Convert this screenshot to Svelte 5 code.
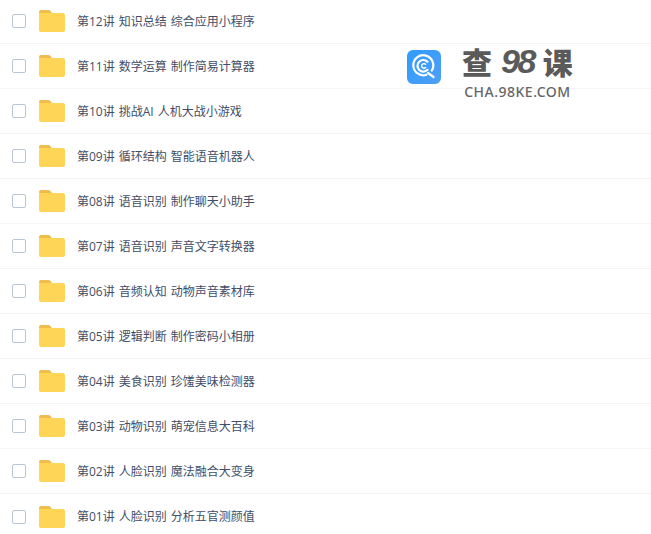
<script>
	const lessons = [
		'第12讲 知识总结 综合应用小程序',
		'第11讲 数学运算 制作简易计算器',
		'第10讲 挑战AI 人机大战小游戏',
		'第09讲 循环结构 智能语音机器人',
		'第08讲 语音识别 制作聊天小助手',
		'第07讲 语音识别 声音文字转换器',
		'第06讲 音频认知 动物声音素材库',
		'第05讲 逻辑判断 制作密码小相册',
		'第04讲 美食识别 珍馐美味检测器',
		'第03讲 动物识别 萌宠信息大百科',
		'第02讲 人脸识别 魔法融合大变身',
		'第01讲 人脸识别 分析五官测颜值'
	];
</script>

<div class="page">
	<ul class="list">
		{#each lessons as name}
			<li class="row">
				<span class="check"></span>
				<svg class="folder" width="26" height="22" viewBox="0 0 26 22" aria-hidden="true">
					<path d="M0 2a2 2 0 0 1 2-2h7.500a2 2 0 0 1 1.600.8L13 3H0z" fill="#f0bc4c" />
					<path d="M0 4a1 1 0 0 1 1-1h23a2 2 0 0 1 2 2v15a2 2 0 0 1-2 2H2a2 2 0 0 1-2-2z" fill="#ffd558" />
				</svg>
				<span class="name">{name}</span>
			</li>
		{/each}
	</ul>

	<div class="mark">
		<svg class="logo" width="34" height="34" viewBox="0 0 34 34" aria-hidden="true">
			<defs>
				<linearGradient id="tile" x1="0" y1="0" x2="1" y2="1">
					<stop offset="0" stop-color="#2f9bff" />
					<stop offset="1" stop-color="#4f9ff5" />
				</linearGradient>
			</defs>
			<rect width="34" height="34" rx="6" fill="url(#tile)" />
			<path d="M24.800 20.500A10 10 0 1 0 19.500 24.700" fill="none" stroke="#fff" stroke-width="2.200" stroke-linecap="round" />
			<path d="M20.500 11.800A5.800 5.800 0 1 0 20.500 19.800" fill="none" stroke="#fff" stroke-width="2.200" stroke-linecap="round" />
			<path d="M18.600 14.300A2.300 2.300 0 1 0 18.600 17.500" fill="none" stroke="#fff" stroke-width="1.400" stroke-linecap="round" />
			<path d="M21 23l5.500 4" stroke="#fff" stroke-width="2.200" stroke-linecap="round" />
		</svg>
		<div class="brand">
			<div class="title"><span>查</span><em>98</em><span>课</span></div>
			<div class="url">CHA.98KE.COM</div>
		</div>
	</div>
</div>

<style>
	:global(body) {
		background: #fff;
	}

	.page {
		position: relative;
		width: 651px;
		height: 534px;
		overflow: hidden;
		font-family: 'Open Sans', 'Noto Sans CJK SC', sans-serif;
	}

	.list {
		list-style: none;
		margin: -1px 0 0;
		padding: 0;
	}

	.row {
		box-sizing: border-box;
		display: flex;
		align-items: center;
		height: 45px;
		padding-left: 12px;
		border-bottom: 1px solid #f3f4f8;
	}

	.row:last-child {
		border-bottom: 0;
	}

	.check {
		box-sizing: border-box;
		width: 14px;
		height: 14px;
		border: 1px solid #b9c6d6;
		border-radius: 2px;
		background: #fff;
	}

	.folder {
		margin-left: 13px;
	}

	.name {
		margin-left: 12px;
		margin-top: 1px;
		font-size: 12px;
		line-height: 16px;
		word-spacing: 0.9px;
		color: #424e67;
	}

	.mark {
		position: absolute;
		left: 407px;
		top: 43px;
		display: flex;
		align-items: flex-start;
		gap: 21px;
	}

	.logo {
		margin-top: 7px;
	}

	.brand {
		display: flex;
		flex-direction: column;
		align-items: center;
		color: #5a5a5a;
	}

	.title {
		display: flex;
		align-items: center;
		gap: 9px;
		height: 36px;
		font-family: 'Noto Sans CJK SC', sans-serif;
		font-size: 30px;
		font-weight: 900;
		line-height: 36px;
	}

	.title em {
		font-family: 'Liberation Sans', sans-serif;
		font-size: 34px;
		font-weight: 700;
		font-style: italic;
		letter-spacing: -2.500px;
	}

	.url {
		margin-top: 5px;
		font-family: 'Noto Sans', sans-serif;
		font-size: 14px;
		font-weight: 500;
		line-height: 16px;
		letter-spacing: 0.500px;
		white-space: nowrap;
		color: #666;
	}
</style>
